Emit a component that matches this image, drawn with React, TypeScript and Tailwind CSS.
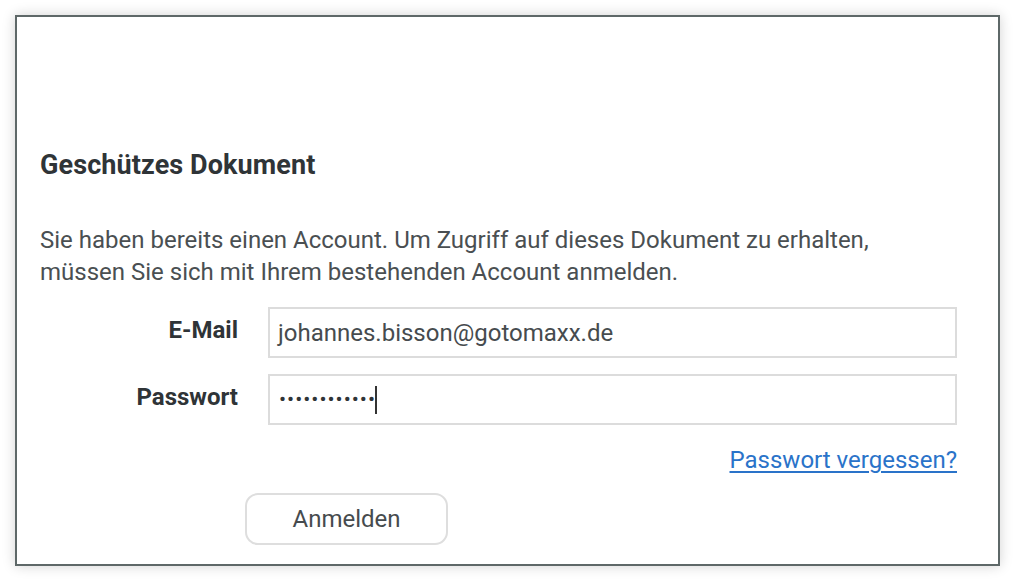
import React from "react";

export default function App() {
  return (
    <div className="w-[1024px] h-[586px] bg-white overflow-hidden pt-[15px] pl-[15px]" style={{ fontFamily: "Roboto, 'Noto Sans', sans-serif" }}>
      <div className="w-[985px] h-[551px] border-2 border-[#5e6868] bg-white shadow-[0_0_12px_rgba(0,0,0,0.18)] pl-[23px] pr-[40px] pt-[132px]">
        <h1 className="text-[27px] font-bold text-[#2f3437] leading-[32px] tracking-[0.1px]">Geschützes Dokument</h1>
        <p className="mt-[43px] text-[24px] leading-[32px] text-[#4a4f52]">
          Sie haben bereits einen Account. Um Zugriff auf dieses Dokument zu erhalten,
          <br />
          müssen Sie sich mit Ihrem bestehenden Account anmelden.
        </p>
        <div className="mt-[19px] flex flex-col gap-[16px]">
          <div className="flex items-center">
            <label className="w-[198px] pb-[5px] text-right text-[24px] font-bold text-[#2f3437]">E-Mail</label>
            <div className="ml-[30px] w-[689px] h-[51px] border-2 border-[#dcdcdc] flex items-center px-[8px] text-[24px] text-[#464b4e]">
              johannes.bisson@gotomaxx.de
            </div>
          </div>
          <div className="flex items-center">
            <label className="w-[198px] pb-[5px] text-right text-[24px] font-bold text-[#2f3437]">Passwort</label>
            <div className="ml-[30px] w-[689px] h-[51px] border-2 border-[#dcdcdc] flex items-center px-[9px] text-[#2f3437]">
              <span className="tracking-[1px] text-[21px] leading-none">••••••••••••</span>
              <span className="-ml-[1px] w-[2px] h-[28px] bg-[#333]" />
            </div>
          </div>
        </div>
        <div className="mt-[21px] flex justify-end w-[917px]">
          <a className="text-[24px] text-[#2a73c9] underline underline-offset-[3px] decoration-[1.5px] leading-[28px]">Passwort vergessen?</a>
        </div>
        <div className="mt-[19px] pl-[205px]">
          <button className="w-[203px] h-[52px] rounded-[13px] border-2 border-[#dedede] bg-white text-[24px] text-[#464b4e]">Anmelden</button>
        </div>
      </div>
    </div>
  );
}
